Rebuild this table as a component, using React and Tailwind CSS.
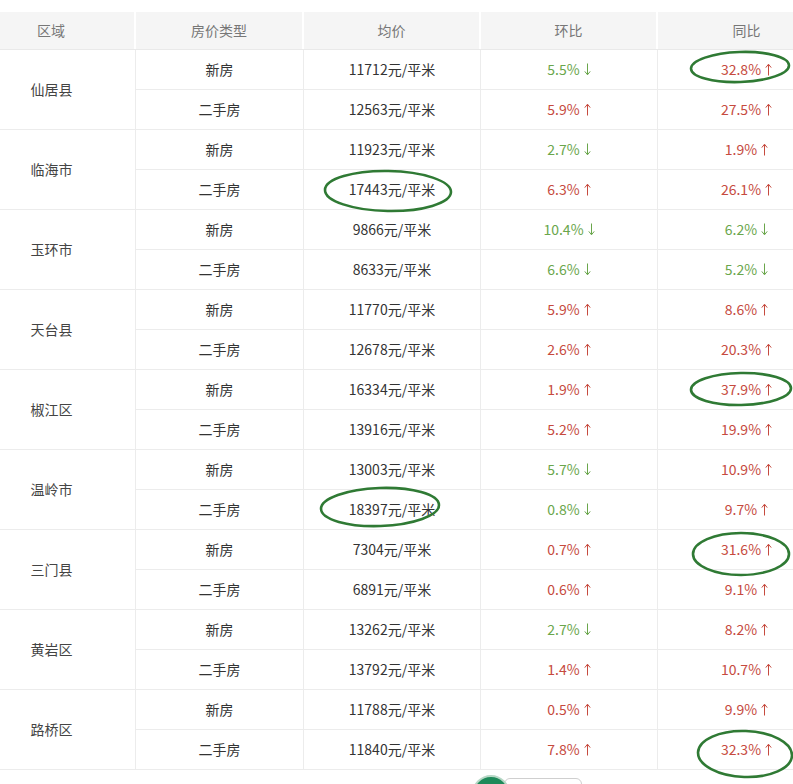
import React from "react";

const rows = [
  { area: "仙居县", items: [["新房", "11712", "5.5", "down", "32.8", "up"], ["二手房", "12563", "5.9", "up", "27.5", "up"]] },
  { area: "临海市", items: [["新房", "11923", "2.7", "down", "1.9", "up"], ["二手房", "17443", "6.3", "up", "26.1", "up"]] },
  { area: "玉环市", items: [["新房", "9866", "10.4", "down", "6.2", "down"], ["二手房", "8633", "6.6", "down", "5.2", "down"]] },
  { area: "天台县", items: [["新房", "11770", "5.9", "up", "8.6", "up"], ["二手房", "12678", "2.6", "up", "20.3", "up"]] },
  { area: "椒江区", items: [["新房", "16334", "1.9", "up", "37.9", "up"], ["二手房", "13916", "5.2", "up", "19.9", "up"]] },
  { area: "温岭市", items: [["新房", "13003", "5.7", "down", "10.9", "up"], ["二手房", "18397", "0.8", "down", "9.7", "up"]] },
  { area: "三门县", items: [["新房", "7304", "0.7", "up", "31.6", "up"], ["二手房", "6891", "0.6", "up", "9.1", "up"]] },
  { area: "黄岩区", items: [["新房", "13262", "2.7", "down", "8.2", "up"], ["二手房", "13792", "1.4", "up", "10.7", "up"]] },
  { area: "路桥区", items: [["新房", "11788", "0.5", "up", "9.9", "up"], ["二手房", "11840", "7.8", "up", "32.3", "up"]] },
];

// 手画的圈（页面坐标）
const marks = [
  { cx: 740, cy: 67, rx: 49, ry: 15, r: -2 },
  { cx: 388, cy: 191, rx: 63, ry: 20, r: 1 },
  { cx: 741, cy: 389, rx: 50, ry: 16, r: -1 },
  { cx: 380, cy: 507, rx: 59, ry: 19, r: -2 },
  { cx: 741, cy: 554, rx: 48, ry: 21, r: 0 },
  { cx: 745, cy: 754, rx: 47, ry: 23, r: 2 },
];

const Arrow = ({ dir }) => (
  <svg width="7" height="13" viewBox="0 0 7 13" className="ml-[4px] inline-block" fill="none" stroke="currentColor" strokeWidth="1">
    {dir === "up" ? (
      <>
        <path d="M3.5 1.5V12.5" />
        <path d="M0.8 4.6L3.5 1.2L6.2 4.6" />
      </>
    ) : (
      <>
        <path d="M3.5 0.5V11.5" />
        <path d="M0.8 8.4L3.5 11.8L6.2 8.4" />
      </>
    )}
  </svg>
);

const Rate = ({ value, dir }) => (
  <span className={`flex items-center ${dir === "up" ? "text-[#c64a3e]" : "text-[#6aa64c]"}`}>
    {value}%
    <Arrow dir={dir} />
  </span>
);

export default function App() {
  return (
    <div className="relative w-[793px] h-[784px] overflow-hidden bg-white text-[14px] font-['Microsoft_YaHei','Noto_Sans_CJK_SC',sans-serif]">
      <div className="ml-[-32px] w-[867px] pt-3">
        {/* 表头 */}
        <div className="flex h-[38px] text-[#777] bg-[#f5f5f5] border-b border-[#e9e9e9]">
          <div className="w-[168px] flex items-center justify-center border-r-2 border-white">区域</div>
          <div className="w-[168px] flex items-center justify-center border-r-2 border-white">房价类型</div>
          <div className="w-[177px] flex items-center justify-center border-r-2 border-white">均价</div>
          <div className="w-[177px] flex items-center justify-center border-r-2 border-white">环比</div>
          <div className="w-[177px] flex items-center justify-center">同比</div>
        </div>

        {rows.map((r) => (
          <div key={r.area} className="flex h-[80px] border-b border-[#ececec]">
            <div className="w-[168px] flex items-center justify-center text-[#444] border-r border-[#ececec]">{r.area}</div>
            <div className="flex-1 flex flex-col">
              {r.items.map((it, i) => (
                <div key={i} className={i === 0 ? "flex h-[40px] border-b border-[#ececec]" : "flex h-[39px]"}>
                  <div className="w-[168px] flex items-center justify-center text-[#333] border-r border-[#ececec]">{it[0]}</div>
                  <div className="w-[177px] flex items-center justify-center text-[#333] border-r border-[#ececec]">{it[1]}元/平米</div>
                  <div className="w-[177px] flex items-center justify-center border-r border-[#ececec]">
                    <Rate value={it[2]} dir={it[3]} />
                  </div>
                  <div className="w-[177px] flex items-center justify-center">
                    <Rate value={it[4]} dir={it[5]} />
                  </div>
                </div>
              ))}
            </div>
          </div>
        ))}
      </div>

      {/* 底部按钮（被截掉一部分） */}
      <div className="flex items-start ml-[472px] mt-[5px]">
        <div className="w-[38px] h-[38px] rounded-full bg-[#1e8a5a] border-2 border-[#b7d8c6] z-10"></div>
        <div className="w-[78px] h-[30px] mt-[3px] -ml-[6px] rounded-[6px] border border-[#cfcfcf] bg-white"></div>
      </div>

      <svg className="absolute left-0 top-0 pointer-events-none" width="793" height="784">
        {marks.map((m, i) => (
          <ellipse
            key={i}
            cx={m.cx}
            cy={m.cy}
            rx={m.rx}
            ry={m.ry}
            transform={`rotate(${m.r} ${m.cx} ${m.cy})`}
            fill="none"
            stroke="#2f7a34"
            strokeWidth="2.6"
          />
        ))}
      </svg>
    </div>
  );
}
